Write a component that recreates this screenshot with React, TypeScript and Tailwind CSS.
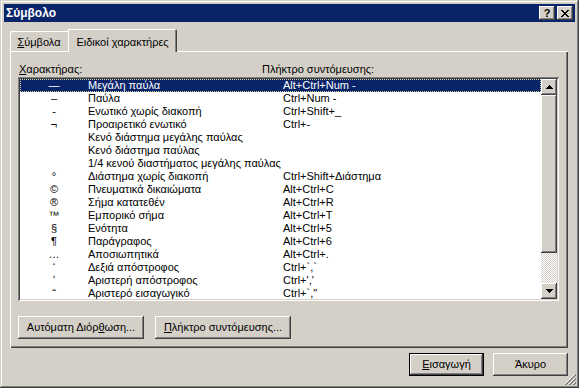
import React from 'react';

const rows: [string, string, string][] = [
  ['—', 'Μεγάλη παύλα', 'Alt+Ctrl+Num -'],
  ['–', 'Παύλα', 'Ctrl+Num -'],
  ['-', 'Ενωτικό χωρίς διακοπή', 'Ctrl+Shift+_'],
  ['¬', 'Προαιρετικό ενωτικό', 'Ctrl+-'],
  ['', 'Κενό διάστημα μεγάλης παύλας', ''],
  ['', 'Κενό διάστημα παύλας', ''],
  ['', '1/4 κενού διαστήματος μεγάλης παύλας', ''],
  ['°', 'Διάστημα χωρίς διακοπή', 'Ctrl+Shift+Διάστημα'],
  ['©', 'Πνευματικά δικαιώματα', 'Alt+Ctrl+C'],
  ['®', 'Σήμα κατατεθέν', 'Alt+Ctrl+R'],
  ['™', 'Εμπορικό σήμα', 'Alt+Ctrl+T'],
  ['§', 'Ενότητα', 'Alt+Ctrl+5'],
  ['¶', 'Παράγραφος', 'Alt+Ctrl+6'],
  ['…', 'Αποσιωπητικά', 'Alt+Ctrl+.'],
  ['‘', 'Δεξιά απόστροφος', 'Ctrl+`,`'],
  ['’', 'Αριστερή απόστροφος', "Ctrl+','"],
  ['“', 'Αριστερό εισαγωγικό', 'Ctrl+`,"'],
];

const raised =
  'bg-[#d4d0c8] shadow-[inset_-1px_-1px_#404040,inset_1px_1px_#ffffff,inset_-2px_-2px_#808080,inset_2px_2px_#d4d0c8]';

function Arrow({ down }: { down?: boolean }) {
  return (
    <svg width="7" height="4" viewBox="0 0 7 4" className={down ? 'rotate-180' : ''}>
      <path d="M3 0h1v1h1v1h1v1h1v1H0V3h1V2h1V1h1z" fill="#000" />
    </svg>
  );
}

export default function App() {
  return (
    <div className="relative w-[579px] h-[388px] bg-[#d4d0c8] p-[4px] flex flex-col text-[11px] leading-[13px] text-black font-['Liberation_Sans',sans-serif] shadow-[inset_-1px_-1px_#404040,inset_1px_1px_#d4d0c8,inset_-2px_-2px_#808080,inset_2px_2px_#ffffff]">
      {/* Title bar */}
      <div className="h-[18px] bg-[#0a246a] flex items-center pl-[2px] pr-[2px]">
        <span className="text-white font-bold text-[12px]">Σύμβολο</span>
        <div className="ml-auto flex items-center">
          <div className={`w-[16px] h-[14px] flex items-center justify-center ${raised}`}>
            <span className="font-bold text-[11px] leading-none">?</span>
          </div>
          <div className={`ml-[2px] w-[16px] h-[14px] flex items-center justify-center ${raised}`}>
            <svg width="8" height="7" viewBox="0 0 8 7">
              <path d="M0 0h2v1h1v1h2V1h1V0h2v1H7v1H6v1H5v1h1v1h1v1h1v1H6V6H5V5H3v1H2v1H0V6h1V5h1V4h1V3H2V2H1V1H0z" fill="#000" />
            </svg>
          </div>
        </div>
      </div>

      <div className="flex flex-col pl-[6px] pr-[7px] pt-[7px]">
        {/* Tabs */}
        <div className="relative z-10 flex items-end h-[23px] -mb-[1px]">
          <div className="mb-[1px] h-[20px] w-[58px] pt-[5px] text-center rounded-tl-[2px] shadow-[inset_1px_1px_#ffffff]">
            <span className="underline">Σ</span>ύμβολα
          </div>
          <div className="h-[23px] w-[109px] pt-[7px] text-center bg-[#d4d0c8] rounded-tr-[2px] shadow-[inset_1px_1px_#ffffff,inset_-1px_0_#404040,inset_-2px_0_#808080]">
            Ειδικοί χαρακτήρες
          </div>
        </div>

        {/* Tab panel */}
        <div className="h-[297px] pl-[8px] pt-[12px] flex flex-col shadow-[inset_1px_1px_#ffffff,inset_-1px_-1px_#404040,inset_-2px_-2px_#808080]">
          <div className="flex h-[13px]">
            <div className="w-[244px] pl-[1px]">
              <span className="underline">Χ</span>αρακτήρας:
            </div>
            <div>Πλήκτρο συντόμευσης:</div>
          </div>

          {/* List */}
          <div className="mt-[1px] w-[541px] h-[224px] p-[2px] bg-white flex shadow-[inset_1px_1px_#808080,inset_-1px_-1px_#ffffff,inset_2px_2px_#404040,inset_-2px_-2px_#d4d0c8]">
            <div className="flex-1 overflow-hidden">
              {rows.map(([sym, name, key], i) => (
                <div
                  key={i}
                  className={`flex h-[13px] items-center ${
                    i === 0 ? 'bg-[#0a246a] text-white outline-1 outline-dotted -outline-offset-1 outline-[#d8d4a0]' : ''
                  }`}
                >
                  <div className="w-[68px] text-center">{sym}</div>
                  <div className="w-[195px] whitespace-nowrap">{name}</div>
                  <div className="whitespace-nowrap">{key}</div>
                </div>
              ))}
            </div>
            {/* Scrollbar */}
            <div className="w-[16px] flex flex-col">
              <div className={`h-[16px] flex items-center justify-center ${raised}`}>
                <Arrow />
              </div>
              <div className={`h-[158px] ${raised}`} />
              <div className="flex-1 bg-[repeating-conic-gradient(#ffffff_0_25%,#d4d0c8_0_50%)] bg-[length:2px_2px]" />
              <div className={`h-[16px] flex items-center justify-center ${raised}`}>
                <Arrow down />
              </div>
            </div>
          </div>

          <div className="mt-[15px] flex gap-[11px]">
            <div className={`w-[126px] h-[23px] flex items-center justify-center ${raised}`}>
              Αυτόματη Διόρ<span className="underline">θ</span>ωση...
            </div>
            <div className={`w-[136px] h-[23px] flex items-center justify-center ${raised}`}>
              <span className="underline">Π</span>λήκτρο συντόμευσης...
            </div>
          </div>
        </div>

        {/* Dialog buttons */}
        <div className="mt-[5px] flex justify-end gap-[9px]">
          <div className="w-[75px] h-[23px] border border-black">
            <div className={`w-full h-full flex items-center justify-center ${raised}`}>
              <span className="underline">Ε</span>ισαγωγή
            </div>
          </div>
          <div className={`w-[75px] h-[23px] flex items-center justify-center ${raised}`}>Άκυρο</div>
        </div>
      </div>

      {/* Size grip */}
      <svg className="absolute right-[3px] bottom-[3px]" width="12" height="12" viewBox="0 0 12 12">
        <path d="M11 1L1 11M11 5L5 11M11 9L9 11" stroke="#ffffff" strokeWidth="1" />
        <path d="M12 1L1 12M12 2L2 12M12 5L5 12M12 6L6 12M12 9L9 12M12 10L10 12" stroke="#808080" strokeWidth="1" />
      </svg>
    </div>
  );
}
